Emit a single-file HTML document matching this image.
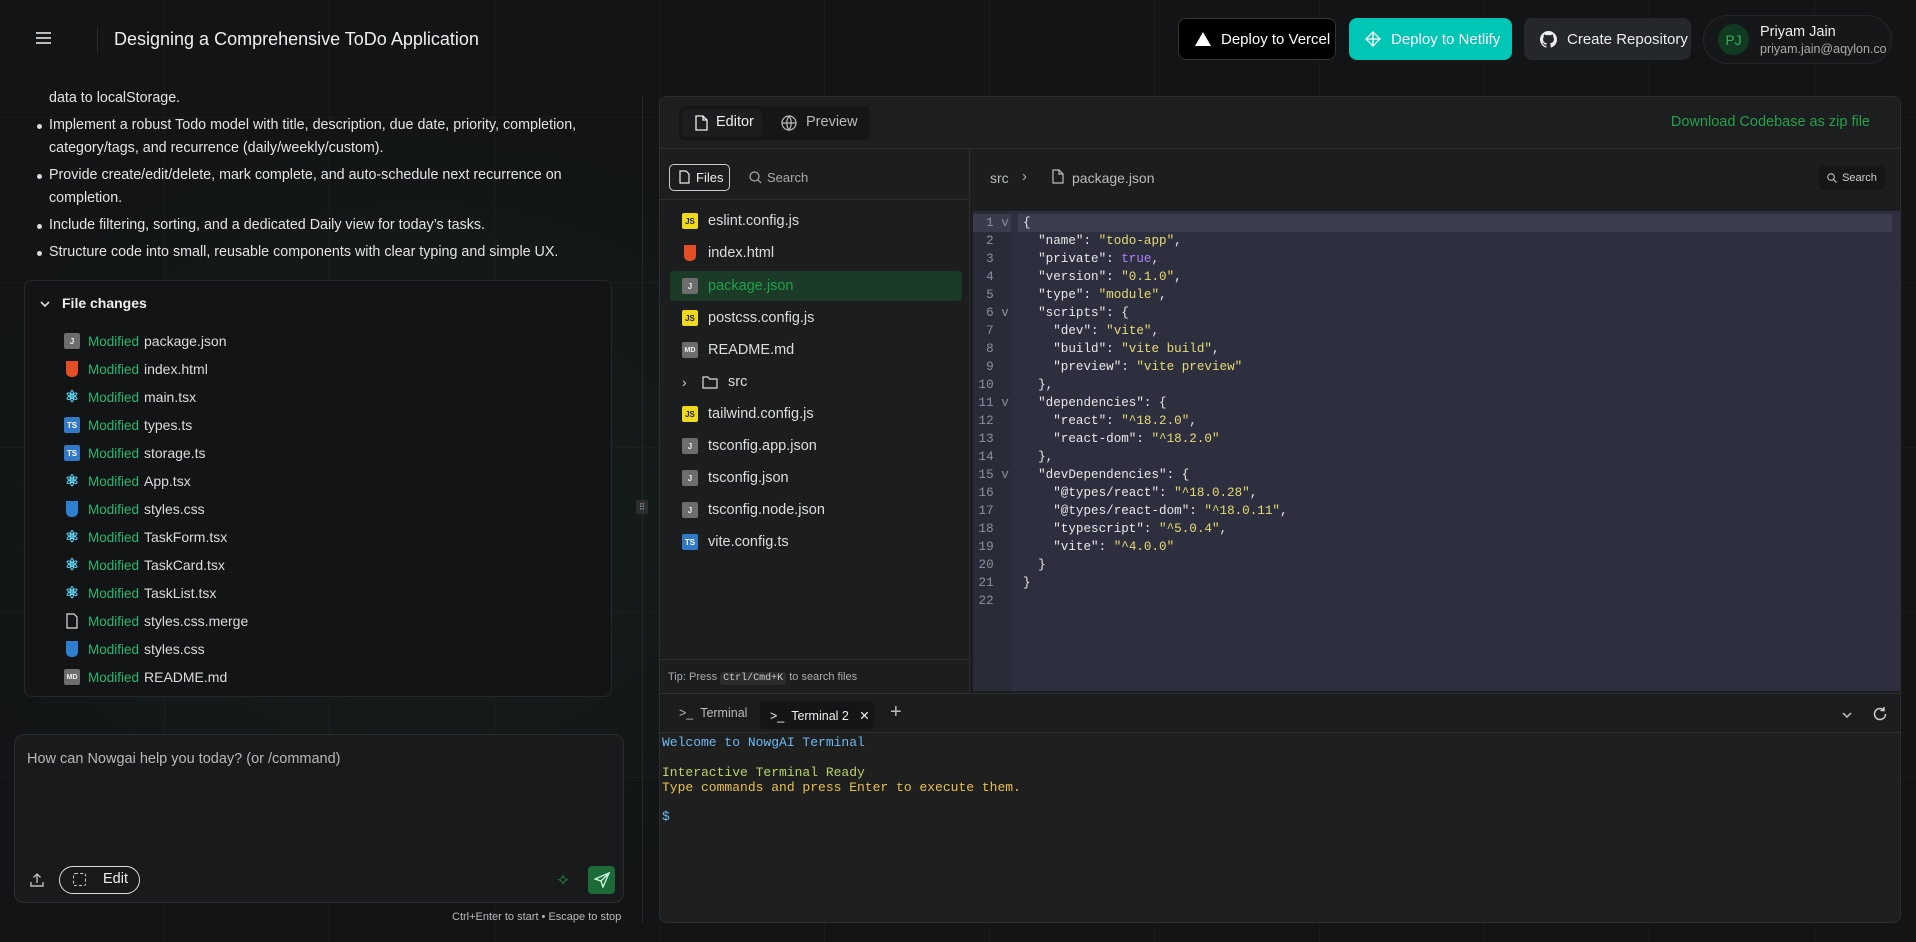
<!DOCTYPE html>
<html><head><meta charset="utf-8"><style>
*{box-sizing:border-box;margin:0;padding:0}
body{width:1916px;height:942px;overflow:hidden;background:#121416;font-family:"Liberation Sans",sans-serif;color:#e6e6e6;position:relative}
.bg{position:absolute;inset:0;background:
radial-gradient(ellipse 500px 400px at 420px 520px,rgba(30,70,45,.25),transparent),
repeating-linear-gradient(90deg,transparent 0 164px,rgba(255,255,255,.03) 164px 165px),
repeating-linear-gradient(0deg,transparent 0 164px,rgba(255,255,255,.03) 164px 165px)}
.abs{position:absolute}
.btn{position:absolute;top:18px;height:42px;border-radius:8px;display:flex;align-items:center;gap:10px;font-size:15px;padding-left:16px}
.li{position:absolute;left:49px;font-size:14.3px;color:#e4e4e4;line-height:23px}
.li.b::before{content:"";position:absolute;left:-12px;top:10px;width:5px;height:5px;border-radius:50%;background:#ddd}
.fc{position:absolute;left:24px;top:280px;width:588px;height:417px;background:#131416;border:1px solid #26292b;border-radius:8px}
.row{position:absolute;left:39px;height:20px;display:flex;align-items:center;font-size:14px}
.row .m{color:#25b872;width:56px;margin-left:8px;font-size:13.5px;flex:none}
.row .n{color:#dcdcdc}
.ic{width:16px;height:16px;display:inline-flex;align-items:center;justify-content:center;font-size:8px;font-weight:bold;border-radius:2px;flex:none}
.js{background:#f0d81c;color:#222}
.j{background:#6d6d6d;color:#eee}
.md{background:#6d6d6d;color:#eee;font-size:7px}
.ts{background:#3178c6;color:#fff}
.html{background:#e44d26;width:12px;border-radius:0 0 5px 5px;margin:0 2px}
.css{background:#2f7fd0;width:12px;border-radius:0 0 5px 5px;margin:0 2px}
.ed{position:absolute;left:659px;top:96px;width:1242px;height:827px;background:#1c1d1f;border:1px solid #2c2e30;border-radius:8px;overflow:hidden}
.tr{position:absolute;left:10px;width:292px;height:30px;display:flex;align-items:center;gap:10px;font-size:14.5px;color:#ddd;padding-left:12px;border-radius:4px}
.code{position:absolute;left:313px;top:114px;right:0;height:480px;background:#2e2f3e;font-family:"Liberation Mono",monospace;font-size:12.6px;overflow:hidden}
.gut{position:absolute;left:0;top:0;width:38px;bottom:0;background:#2a2b38}
.ln{position:absolute;height:18px;line-height:18px;white-space:pre}
.k{color:#e8e8e8}.s{color:#e6db74}.t{color:#ae81ff}
.term{position:absolute;left:0;top:636px;right:0;bottom:0;background:#1f1f1f}
.tm{font-family:"Liberation Mono",monospace;font-size:13px;position:absolute;left:2px;white-space:pre}
</style></head><body>
<div class="bg"></div>

<div class="abs" style="left:36px;top:32px;width:15px;height:2px;background:#bbb;box-shadow:0 5px 0 #bbb,0 10px 0 #bbb"></div>
<div class="abs" style="left:97px;top:28px;width:1px;height:24px;background:#2c2e30"></div>
<div class="abs" style="left:114px;top:29px;font-size:18px;color:#eee">Designing a Comprehensive ToDo Application</div>

<div class="btn" style="left:1178px;width:158px;background:#000;border:1px solid #333;color:#fff"><svg width="16" height="14"><polygon points="8,0 16,14 0,14" fill="#fff"/></svg>Deploy to Vercel</div>
<div class="btn" style="left:1349px;width:163px;background:#00c6b6;color:#fff"><svg width="16" height="16" viewBox="0 0 16 16" fill="none" stroke="#fff" stroke-width="1.3"><path d="M8 1L15 8L8 15L1 8Z M1 8H15 M8 1V15"/></svg>Deploy to Netlify</div>
<div class="btn" style="left:1524px;width:167px;background:#24272b;color:#eee"><svg width="17" height="17" viewBox="0 0 16 16"><path fill="#eee" d="M8 0C3.6 0 0 3.6 0 8c0 3.5 2.3 6.5 5.5 7.6.4.1.5-.2.5-.4v-1.4c-2.2.5-2.7-1-2.7-1-.4-.9-.9-1.2-.9-1.2-.7-.5.1-.5.1-.5.8.1 1.200.8 1.2.8.7 1.2 1.9.9 2.3.7.1-.5.3-.9.5-1.1-1.8-.2-3.6-.9-3.6-4 0-.9.3-1.6.8-2.1-.1-.2-.4-1 .1-2.1 0 0 .7-.2 2.2.8.6-.2 1.3-.3 2-.3s1.4.1 2 .3c1.5-1 2.2-.8 2.2-.8.4 1.1.2 1.9.1 2.1.5.6.8 1.3.8 2.1 0 3.1-1.9 3.7-3.6 3.9.3.3.5.8.5 1.5v2.2c0 .2.1.5.6.4C13.7 14.5 16 11.5 16 8c0-4.4-3.6-8-8-8z"/></svg>Create Repository</div>
<div class="abs" style="left:1703px;top:15px;width:189px;height:49px;border-radius:25px;background:#151719;border:1px solid #24272a"></div>
<div class="abs" style="left:1718px;top:24px;width:31px;height:31px;border-radius:50%;background:#123a22;color:#2fae5a;font-size:14px;display:flex;align-items:center;justify-content:center">PJ</div>
<div class="abs" style="left:1760px;top:24px;font-size:14.5px;color:#eee">Priyam Jain</div>
<div class="abs" style="left:1760px;top:42px;font-size:12.5px;color:#aaa">priyam.jain@aqylon.co</div>

<div class="li" style="top:87px">data to localStorage.</div>
<div class="li b" style="top:114px">Implement a robust Todo model with title, description, due date, priority, completion,</div>
<div class="li" style="top:137px">category/tags, and recurrence (daily/weekly/custom).</div>
<div class="li b" style="top:164px">Provide create/edit/delete, mark complete, and auto-schedule next recurrence on</div>
<div class="li" style="top:187px">completion.</div>
<div class="li b" style="top:214px">Include filtering, sorting, and a dedicated Daily view for today’s tasks.</div>
<div class="li b" style="top:241px">Structure code into small, reusable components with clear typing and simple UX.</div>

<div class="fc">
<svg class="abs" style="left:14px;top:17px" width="12" height="12" viewBox="0 0 12 12" fill="none" stroke="#ddd" stroke-width="1.6"><path d="M2 4L6 8L10 4"/></svg>
<div class="abs" style="left:37px;top:14px;font-size:14px;font-weight:bold;color:#eee">File changes</div>
<div class="row" style="top:50px"><span class="ic j">J</span><span class="m">Modified</span><span class="n">package.json</span></div>
<div class="row" style="top:78px"><span class="ic html"></span><span class="m">Modified</span><span class="n">index.html</span></div>
<div class="row" style="top:106px"><span class="ic" style="color:#61dafb;font-size:16px">⚛</span><span class="m">Modified</span><span class="n">main.tsx</span></div>
<div class="row" style="top:134px"><span class="ic ts">TS</span><span class="m">Modified</span><span class="n">types.ts</span></div>
<div class="row" style="top:162px"><span class="ic ts">TS</span><span class="m">Modified</span><span class="n">storage.ts</span></div>
<div class="row" style="top:190px"><span class="ic" style="color:#61dafb;font-size:16px">⚛</span><span class="m">Modified</span><span class="n">App.tsx</span></div>
<div class="row" style="top:218px"><span class="ic css"></span><span class="m">Modified</span><span class="n">styles.css</span></div>
<div class="row" style="top:246px"><span class="ic" style="color:#61dafb;font-size:16px">⚛</span><span class="m">Modified</span><span class="n">TaskForm.tsx</span></div>
<div class="row" style="top:274px"><span class="ic" style="color:#61dafb;font-size:16px">⚛</span><span class="m">Modified</span><span class="n">TaskCard.tsx</span></div>
<div class="row" style="top:302px"><span class="ic" style="color:#61dafb;font-size:16px">⚛</span><span class="m">Modified</span><span class="n">TaskList.tsx</span></div>
<div class="row" style="top:330px"><span class="ic"><svg width="12" height="16" viewBox="0 0 12 16" fill="none" stroke="#ddd" stroke-width="1.2"><path d="M1 1H8L11 4V15H1Z"/></svg></span><span class="m">Modified</span><span class="n">styles.css.merge</span></div>
<div class="row" style="top:358px"><span class="ic css"></span><span class="m">Modified</span><span class="n">styles.css</span></div>
<div class="row" style="top:386px"><span class="ic md">MD</span><span class="m">Modified</span><span class="n">README.md</span></div>
</div>

<div class="abs" style="left:14px;top:734px;width:610px;height:169px;background:#181a1b;border:1px solid #2b2e30;border-radius:10px"></div>
<div class="abs" style="left:27px;top:751px;font-size:14.5px;color:#b8b8b8">How can Nowgai help you today? (or /command)</div>
<svg class="abs" style="left:29px;top:872px" width="16" height="16" viewBox="0 0 16 16" fill="none" stroke="#bbb" stroke-width="1.4"><path d="M8 11V2M4.5 5.5L8 2L11.5 5.5M2 10V14H14V10"/></svg>
<div class="abs" style="left:59px;top:866px;width:81px;height:28px;border:1.5px solid #ddd;border-radius:14px"></div>
<div class="abs" style="left:73px;top:873px;width:13px;height:13px;border:1.5px dashed #ccc;border-radius:2px"></div>
<div class="abs" style="left:103px;top:871px;font-size:14.5px;color:#eee">Edit</div>
<div class="abs" style="left:556px;top:871px;color:#2a8a48;font-size:17px">✧</div>
<div class="abs" style="left:588px;top:866px;width:27px;height:28px;background:#1c6a38;border-radius:4px"></div>
<svg class="abs" style="left:594px;top:872px" width="16" height="16" viewBox="0 0 16 16" fill="none" stroke="#cfd" stroke-width="1.3"><path d="M15 1L1 7L7 9L9 15Z M15 1L7 9"/></svg>
<div class="abs" style="left:452px;top:911px;font-size:11px;color:#bbb">Ctrl+Enter to start • Escape to stop</div>

<div class="abs" style="left:642px;top:96px;width:1px;height:827px;background:#23282a"></div>
<div class="abs" style="left:636px;top:500px;width:12px;height:14px;background:#2b2e30;border-radius:2px;color:#999;font-size:9px;text-align:center;line-height:14px">⠿</div>

<div class="ed">
<div class="abs" style="left:0;top:0;right:0;height:52px;border-bottom:1px solid #2c2e30;background:#1d1e20"></div>
<div class="abs" style="left:19px;top:9px;width:191px;height:34px;background:#151617;border-radius:6px"></div>
<div class="abs" style="left:22px;top:12px;width:80px;height:28px;background:#1c1d1f;border-radius:5px"></div>
<svg class="abs" style="left:35px;top:18px" width="13" height="16" viewBox="0 0 13 16" fill="none" stroke="#eee" stroke-width="1.3"><path d="M1 1H8L12 5V15H1Z M8 1V5H12"/></svg>
<div class="abs" style="left:56px;top:17px;font-size:14.5px;color:#eee">Editor</div>
<svg class="abs" style="left:121px;top:18px" width="16" height="16" viewBox="0 0 16 16" fill="none" stroke="#bbb" stroke-width="1.2"><circle cx="8" cy="8" r="7"/><path d="M1 8H15M8 1C5 5 5 11 8 15C11 11 11 5 8 1"/></svg>
<div class="abs" style="left:146px;top:17px;font-size:14.5px;color:#bbb">Preview</div>
<div class="abs" style="right:30px;top:17px;font-size:14.5px;color:#22a04a">Download Codebase as zip file</div>

<div class="abs" style="left:309px;top:52px;width:1px;height:544px;background:#2c2e30"></div>
<div class="abs" style="left:0;top:102px;width:309px;height:1px;background:#2c2e30"></div>
<div class="abs" style="left:9px;top:67px;width:61px;height:27px;border:1.5px solid #ccc;border-radius:5px"></div>
<svg class="abs" style="left:19px;top:73px" width="11" height="14" viewBox="0 0 11 14" fill="none" stroke="#eee" stroke-width="1.2"><path d="M1 1H7L10 4V13H1Z"/></svg>
<div class="abs" style="left:36px;top:73px;font-size:13px;color:#eee">Files</div>
<svg class="abs" style="left:89px;top:74px" width="13" height="13" viewBox="0 0 13 13" fill="none" stroke="#aaa" stroke-width="1.2"><circle cx="5.5" cy="5.5" r="4.5"/><path d="M9 9L12 12"/></svg>
<div class="abs" style="left:107px;top:73px;font-size:13px;color:#aaa">Search</div>

<div class="tr" style="top:109px"><span class="ic js">JS</span>eslint.config.js</div>
<div class="tr" style="top:141px"><span class="ic html"></span>index.html</div>
<div class="tr" style="top:174px;background:#1b3a28;color:#22a04a"><span class="ic j">J</span>package.json</div>
<div class="tr" style="top:206px"><span class="ic js">JS</span>postcss.config.js</div>
<div class="tr" style="top:238px"><span class="ic md">MD</span>README.md</div>
<div class="tr" style="top:270px"><span style="color:#ccc;font-size:14px;width:10px">›</span><svg width="16" height="14" viewBox="0 0 16 14" fill="none" stroke="#ddd" stroke-width="1.2"><path d="M1 2H6L7.5 4H15V13H1Z"/></svg>src</div>
<div class="tr" style="top:302px"><span class="ic js">JS</span>tailwind.config.js</div>
<div class="tr" style="top:334px"><span class="ic j">J</span>tsconfig.app.json</div>
<div class="tr" style="top:366px"><span class="ic j">J</span>tsconfig.json</div>
<div class="tr" style="top:398px"><span class="ic j">J</span>tsconfig.node.json</div>
<div class="tr" style="top:430px"><span class="ic ts">TS</span>vite.config.ts</div>
<div class="abs" style="left:0;top:562px;width:309px;height:1px;background:#2c2e30"></div>
<div class="abs" style="left:8px;top:574px;font-size:11px;color:#aaa">Tip: Press <span style="background:#2a2c2e;padding:1px 3px;border-radius:3px;font-family:'Liberation Mono',monospace;font-size:10px;color:#ccc">Ctrl/Cmd+K</span> to search files</div>

<div class="abs" style="left:330px;top:73px;font-size:14px;color:#bbb">src</div>
<div class="abs" style="left:362px;top:71px;font-size:15px;color:#aaa">›</div>
<svg class="abs" style="left:392px;top:72px" width="12" height="15" viewBox="0 0 12 15" fill="none" stroke="#bbb" stroke-width="1.2"><path d="M1 1H7L11 5V14H1Z M7 1V5H11"/></svg>
<div class="abs" style="left:412px;top:73px;font-size:14px;color:#bbb">package.json</div>
<div class="abs" style="right:15px;top:69px;width:66px;height:24px;background:#151617;border-radius:4px;font-size:11px;color:#ccc;display:flex;align-items:center;justify-content:center;gap:5px"><svg width="10" height="10" viewBox="0 0 10 10" fill="none" stroke="#ccc" stroke-width="1"><circle cx="4" cy="4" r="3.3"/><path d="M6.5 6.5L9.5 9.5"/></svg>Search</div>

<div class="code">
<div class="gut"></div>
<div class="abs" style="left:0;width:38px;top:3px;height:18px;background:#3a3c4d"></div>
<div class="abs" style="left:45px;right:8px;top:3px;height:18px;background:#3c3e50"></div>
<div style="position:absolute;left:-4px;top:3px;color:#8d8f9e">
<div class="ln" style="top:0;left:2px">  1 v</div><div class="ln" style="top:18px;left:2px">  2</div><div class="ln" style="top:36px;left:2px">  3</div><div class="ln" style="top:54px;left:2px">  4</div><div class="ln" style="top:72px;left:2px">  5</div><div class="ln" style="top:90px;left:2px">  6 v</div><div class="ln" style="top:108px;left:2px">  7</div><div class="ln" style="top:126px;left:2px">  8</div><div class="ln" style="top:144px;left:2px">  9</div><div class="ln" style="top:162px;left:2px"> 10</div><div class="ln" style="top:180px;left:2px"> 11 v</div><div class="ln" style="top:198px;left:2px"> 12</div><div class="ln" style="top:216px;left:2px"> 13</div><div class="ln" style="top:234px;left:2px"> 14</div><div class="ln" style="top:252px;left:2px"> 15 v</div><div class="ln" style="top:270px;left:2px"> 16</div><div class="ln" style="top:288px;left:2px"> 17</div><div class="ln" style="top:306px;left:2px"> 18</div><div class="ln" style="top:324px;left:2px"> 19</div><div class="ln" style="top:342px;left:2px"> 20</div><div class="ln" style="top:360px;left:2px"> 21</div><div class="ln" style="top:378px;left:2px"> 22</div>
</div>
<div style="position:absolute;left:50px;top:3px" class="k">
<div class="ln" style="top:0">{</div>
<div class="ln" style="top:18px">  "name": <span class="s">"todo-app"</span>,</div>
<div class="ln" style="top:36px">  "private": <span class="t">true</span>,</div>
<div class="ln" style="top:54px">  "version": <span class="s">"0.1.0"</span>,</div>
<div class="ln" style="top:72px">  "type": <span class="s">"module"</span>,</div>
<div class="ln" style="top:90px">  "scripts": {</div>
<div class="ln" style="top:108px">    "dev": <span class="s">"vite"</span>,</div>
<div class="ln" style="top:126px">    "build": <span class="s">"vite build"</span>,</div>
<div class="ln" style="top:144px">    "preview": <span class="s">"vite preview"</span></div>
<div class="ln" style="top:162px">  },</div>
<div class="ln" style="top:180px">  "dependencies": {</div>
<div class="ln" style="top:198px">    "react": <span class="s">"^18.2.0"</span>,</div>
<div class="ln" style="top:216px">    "react-dom": <span class="s">"^18.2.0"</span></div>
<div class="ln" style="top:234px">  },</div>
<div class="ln" style="top:252px">  "devDependencies": {</div>
<div class="ln" style="top:270px">    "@types/react": <span class="s">"^18.0.28"</span>,</div>
<div class="ln" style="top:288px">    "@types/react-dom": <span class="s">"^18.0.11"</span>,</div>
<div class="ln" style="top:306px">    "typescript": <span class="s">"^5.0.4"</span>,</div>
<div class="ln" style="top:324px">    "vite": <span class="s">"^4.0.0"</span></div>
<div class="ln" style="top:342px">  }</div>
<div class="ln" style="top:360px">}</div>
</div>
</div>

<div class="abs" style="left:0;right:0;top:596px;height:1px;background:#2c2e30"></div>
<div class="abs" style="left:0;right:0;top:597px;height:39px;background:#1a1c1d;border-bottom:1px solid #2c2e30"></div>
<div class="abs" style="left:19px;top:609px;font-size:12.5px;color:#bbb">&gt;_ &nbsp;Terminal</div>
<div class="abs" style="left:100px;top:604px;width:114px;height:28px;background:#141516;border-radius:5px"></div>
<div class="abs" style="left:110px;top:611px;font-size:12.5px;color:#eee">&gt;_ &nbsp;Terminal 2 &nbsp;&nbsp;✕</div>
<div class="abs" style="left:230px;top:604px;font-size:20px;color:#bbb">+</div>
<svg class="abs" style="left:1181px;top:614px" width="12" height="8" viewBox="0 0 12 8" fill="none" stroke="#ccc" stroke-width="1.4"><path d="M2 2L6 6L10 2"/></svg>
<svg class="abs" style="left:1212px;top:609px" width="16" height="16" viewBox="0 0 16 16" fill="none" stroke="#ccc" stroke-width="1.5"><path d="M13.5 8A5.5 5.5 0 1 1 11.5 3.8M12 1V4.5H8.5"/></svg>
<div class="term">
<div class="tm" style="top:2px;color:#6cb8f2">Welcome to NowgAI Terminal</div>
<div class="tm" style="top:32px;color:#b5d56a">Interactive Terminal Ready</div>
<div class="tm" style="top:47px;color:#e6c14c">Type commands and press Enter to execute them.</div>
<div class="tm" style="top:76px;color:#6cb8f2">$</div>
</div>
</div>
</body></html>
